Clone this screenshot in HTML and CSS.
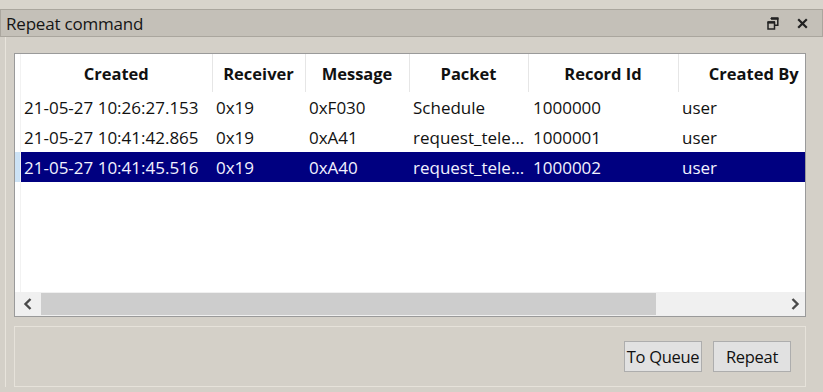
FILE: index.html
```html
<!DOCTYPE html>
<html lang="en">
<head>
  <meta charset="UTF-8">
  <title>Repeat command</title>
  <link rel="stylesheet" href="styles.css">
</head>
<body>

  <div class="dock">
    <div class="dock-title">
      <span class="title-text">Repeat command</span>
      <span class="title-btns">
        <svg class="ico" width="12" height="13" viewBox="0 0 12 13">
          <path d="M4.2 2v-0.3h6.6v6.6h-3" fill="none" stroke="#222" stroke-width="1.5"/>
          <path d="M4 1.4h7.5" stroke="#222" stroke-width="2.4"/>
          <rect x="1" y="5.5" width="6.5" height="6.5" fill="none" stroke="#222" stroke-width="1.5"/>
          <path d="M0.5 5.3h7.5" stroke="#222" stroke-width="2.4"/>
        </svg>
        <svg class="ico" width="11" height="11" viewBox="0 0 11 11">
          <path d="M1.2 1.2l8.6 8.6M9.8 1.2l-8.6 8.6" stroke="#222" stroke-width="2.2"/>
        </svg>
      </span>
    </div>

    <div class="dock-body">
      <div class="table-frame">
        <div class="view">
          <div class="vheader">
            <div class="vh-top"></div>
            <div class="vh-row"></div>
            <div class="vh-row"></div>
            <div class="vh-row selected"></div>
          </div>
          <div class="grid-clip">
            <table class="grid">
              <colgroup>
                <col style="width:191px">
                <col style="width:93px">
                <col style="width:104px">
                <col style="width:119px">
                <col style="width:150px">
                <col style="width:151px">
              </colgroup>
              <thead>
                <tr>
                  <th>Created</th>
                  <th>Receiver</th>
                  <th>Message</th>
                  <th>Packet</th>
                  <th>Record Id</th>
                  <th>Created By</th>
                </tr>
              </thead>
              <tbody>
                <tr>
                  <td class="first">21-05-27 10:26:27.153</td>
                  <td>0x19</td>
                  <td>0xF030</td>
                  <td>Schedule</td>
                  <td class="rec">1000000</td>
                  <td>user</td>
                </tr>
                <tr>
                  <td class="first">21-05-27 10:41:42.865</td>
                  <td>0x19</td>
                  <td>0xA41</td>
                  <td>request_tele…</td>
                  <td class="rec">1000001</td>
                  <td>user</td>
                </tr>
                <tr class="selected">
                  <td class="first">21-05-27 10:41:45.516</td>
                  <td>0x19</td>
                  <td>0xA40</td>
                  <td>request_tele…</td>
                  <td class="rec">1000002</td>
                  <td>user</td>
                </tr>
              </tbody>
            </table>
          </div>
        </div>

        <div class="hscroll">
          <div class="sb-btn">
            <svg width="14" height="14" viewBox="0 0 14 14"><path d="M9.5 2L4.5 7l5 5" fill="none" stroke="#4a4a4a" stroke-width="2.4"/></svg>
          </div>
          <div class="sb-track">
            <div class="sb-thumb"></div>
          </div>
          <div class="sb-btn">
            <svg width="14" height="14" viewBox="0 0 14 14"><path d="M4.5 2l5 5-5 5" fill="none" stroke="#4a4a4a" stroke-width="2.4"/></svg>
          </div>
        </div>
      </div>

      <div class="button-box">
        <button class="btn">To Queue</button>
        <button class="btn">Repeat</button>
      </div>
    </div>
  </div>

</body>
</html>
```

FILE: styles.css
```css
body {
  margin: 0;
  padding-top: 9px;
  background: #d8d4cc;
  font-family: 'Open Sans', 'Noto Sans', sans-serif;
  font-size: 17px;
  color: #111;
  height: 383px;
  overflow: hidden;
}

.dock {
  background: #d4d0c8;
  height: 383px;
}

.dock-title {
  display: flex;
  align-items: center;
  justify-content: space-between;
  height: 26px;
  background: #c4c0b8;
  border: 1px solid #aaa69e;
  padding: 0 14px 0 5px;
}

.title-text {
  font-size: 17px;
  letter-spacing: -0.2px;
  color: #151515;
}

.title-btns {
  display: flex;
  align-items: center;
  gap: 18px;
}

.ico {
  display: block;
}

.dock-body {
  margin-left: 5px;
  border-left: 1px solid #e8e4dc;
  padding: 16px 17px 0 8px;
}

.table-frame {
  border: 1px solid #9a9a9a;
  background: #fff;
  height: 262px;
  display: flex;
  flex-direction: column;
}

.view {
  display: flex;
  height: 238px;
}

.vheader {
  width: 5px;
  border-right: 1px solid #f2f2f2;
}

.vh-top {
  height: 38px;
}

.vh-row {
  height: 30px;
}

.vh-row.selected {
  background: #cce2f5;
}

.grid-clip {
  flex: 1;
  overflow: hidden;
}

.grid {
  table-layout: fixed;
  border-collapse: collapse;
  width: 808px;
}

.grid th {
  height: 38px;
  padding: 0;
  font-weight: 700;
  font-size: 16.5px;
  text-align: center;
  border-left: 1px solid #e6e6e6;
  white-space: nowrap;
}

.grid th:first-child {
  border-left: none;
}

.grid td {
  height: 30px;
  padding: 0 0 0 4px;
  white-space: nowrap;
  overflow: hidden;
}

.grid td.first {
  padding-left: 3px;
}

.grid td.rec {
  padding-left: 5px;
}

.grid tr.selected td {
  background: #000080;
  color: #f2f2ff;
}

.hscroll {
  display: flex;
  height: 24px;
  background: #f0f0f0;
}

.sb-btn {
  width: 26px;
  display: flex;
  align-items: center;
  justify-content: center;
}

.sb-btn:last-child {
  width: 20px;
}

.sb-track {
  flex: 1;
  padding: 1px 0 0;
}

.sb-thumb {
  width: 615px;
  height: 22px;
  background: #cdcdcd;
}

.button-box {
  margin-top: 9px;
  border: 1px solid #e6e2da;
  padding: 14px 14px;
  display: flex;
  justify-content: flex-end;
  gap: 11px;
}

.btn {
  font-family: 'Open Sans', 'Noto Sans', sans-serif;
  font-size: 16.5px;
  letter-spacing: -0.3px;
  white-space: nowrap;
  color: #111;
  height: 31px;
  width: 78px;
  padding: 0;
  background: #e1e1e1;
  border: 1px solid #adadad;
}
```
